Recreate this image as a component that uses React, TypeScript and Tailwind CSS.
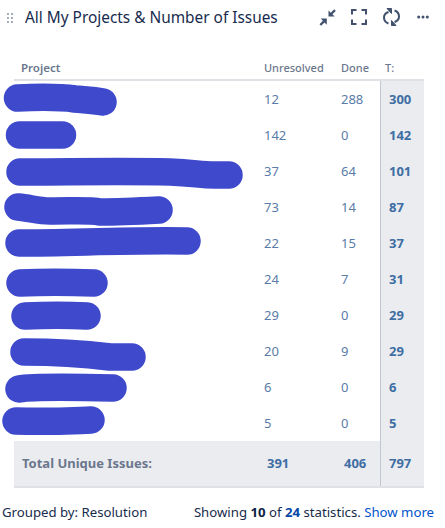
const rows: [number, number, number][] = [
  [12, 288, 300],
  [142, 0, 142],
  [37, 64, 101],
  [73, 14, 87],
  [22, 15, 37],
  [24, 7, 31],
  [29, 0, 29],
  [20, 9, 29],
  [6, 0, 6],
  [5, 0, 5],
];

const scribbles = [
  "M17.500 98 C40 97 60 97 75 99 C85 100 92 100 103 102",
  "M19.500 135 L62.500 135",
  "M20 172 C70 172 120 171 170 172 C195 173 200 175 215 175 L229 175",
  "M18 207 C30 208 38 211 50 211 C75 211 90 210 100 212 C115 212 140 211 159 210",
  "M19 243 C70 243 130 240 187 241",
  "M20 283 C40 282 70 282 94 283",
  "M25 316 C45 315 70 315 87 316",
  "M24 352 C50 352 85 354 110 357 L132 357",
  "M19 389 C30 387 70 387 113 388",
  "M16 421 C50 422 65 421 91 420",
];

export default function App() {
  return (
    <div className="relative w-[445px] h-[528px] overflow-hidden bg-white font-['Noto_Sans','Open_Sans',sans-serif] text-[#172b4d]">
      <div className="flex items-center h-[36px] pl-[7px] pr-[16px]">
        <svg width="6" height="11" viewBox="0 0 6 11" className="shrink-0" fill="#a5adba">
          <rect x="0" y="0" width="2" height="2" /><rect x="4" y="0" width="2" height="2" />
          <rect x="0" y="4" width="2" height="2" /><rect x="4" y="4" width="2" height="2" />
          <rect x="0" y="8" width="2" height="2" /><rect x="4" y="8" width="2" height="2" />
        </svg>
        <div className="ml-[12px] text-[15.4px] leading-[36px] whitespace-nowrap">All My Projects &amp; Number of Issues</div>
        <div className="ml-auto -mt-[2px] flex items-center">
          <svg width="17" height="17" viewBox="0 0 17 17" fill="#42526e">
            <path d="M16.800 1.900 L15.200 0.300 L11.800 3.700 L9.500 1.400 L9.500 7.500 L15.600 7.500 L13.400 5.300 Z" />
            <path d="M0.500 15.200 L2.100 16.800 L5.500 13.400 L7.800 15.700 L7.800 9.500 L1.700 9.500 L3.900 11.800 Z" />
          </svg>
          <svg width="16" height="16" viewBox="0 0 16 16" className="ml-[15px]" fill="none" stroke="#42526e" strokeWidth="2">
            <path d="M1 5.500 V1 H5.500 M10.500 1 H15 V5.500 M15 10.500 V15 H10.500 M5.500 15 H1 V10.500" />
          </svg>
          <svg width="17" height="18" viewBox="0 0 17 18" className="ml-[16px]" fill="none" stroke="#42526e" strokeWidth="2">
            <path d="M5.500 4 C2.500 5 1 7 1 9.500 C1 12 2.500 14.500 5.500 15.500" />
            <path d="M4 0.500 L8.500 0.500 L8.500 5.500 Z" fill="#42526e" strokeWidth="1" />
            <path d="M11.500 14 C14.500 13 16 11 16 8.500 C16 6 14.500 3.500 11.500 2.500" />
            <path d="M13 17.500 L8.500 17.500 L8.500 12.500 Z" fill="#42526e" strokeWidth="1" />
          </svg>
          <svg width="12" height="4" viewBox="0 0 12 4" className="ml-[17px]" fill="#42526e">
            <circle cx="1.700" cy="2" r="1.500" /><circle cx="6" cy="2" r="1.500" /><circle cx="10.300" cy="2" r="1.500" />
          </svg>
        </div>
      </div>

      <div className="ml-[14px] w-[410px] mt-[18px]">
        <div className="flex h-[27px] border-b-2 border-[#dfe1e6] text-[11px] font-medium leading-[28px] text-[#6b778c]">
          <div className="w-[250px] pl-[7px] text-[11.5px] font-semibold">Project</div>
          <div className="w-[77px]">Unresolved</div>
          <div className="w-[44px]">Done</div>
          <div className="w-[39px]">T:</div>
        </div>
        {rows.map((r, i) => (
          <div key={i} className="flex h-[36px] items-center text-[13px] leading-[38px] text-[#5a7ca8]">
            <div className="w-[250px]" />
            <div className="w-[77px]">{r[0]}</div>
            <div className="w-[39px]">{r[1]}</div>
            <div className="w-[44px] h-full pl-[8px] bg-[#ebecf0] border-l border-[#c1c7d0] font-bold text-[#3e6ea3] leading-[36px]">{r[2]}</div>
          </div>
        ))}
        <div className="flex h-[47px] items-center bg-[#ebecf0] border-b-2 border-[#dfe1e6] text-[13px] font-bold text-[#3e6ea3]">
          <div className="w-[253px] pl-[8px] text-[13px] text-[#6b778c]">Total Unique Issues:</div>
          <div className="w-[77px]">391</div>
          <div className="w-[36px]">406</div>
          <div className="w-[44px] h-full pl-[8px] border-l border-[#c1c7d0] leading-[45px]">797</div>
        </div>
      </div>

      <div className="mt-[15px] flex justify-between pl-[2px] pr-[11px] text-[13.2px] leading-[18px] text-[#172b4d] whitespace-nowrap">
        <div>Grouped by: Resolution</div>
        <div>
          Showing <b className="text-[#091e42]">10</b> of <b className="text-[#0747a6]">24</b> statistics. <span className="text-[#0052cc]">Show more</span>
        </div>
      </div>

      <svg width="445" height="528" className="absolute left-0 top-0 pointer-events-none" fill="none" stroke="#3f49cc" strokeWidth="27.500" strokeLinecap="round" strokeLinejoin="round">
        {scribbles.map((d, i) => <path key={i} d={d} />)}
      </svg>
    </div>
  );
}
